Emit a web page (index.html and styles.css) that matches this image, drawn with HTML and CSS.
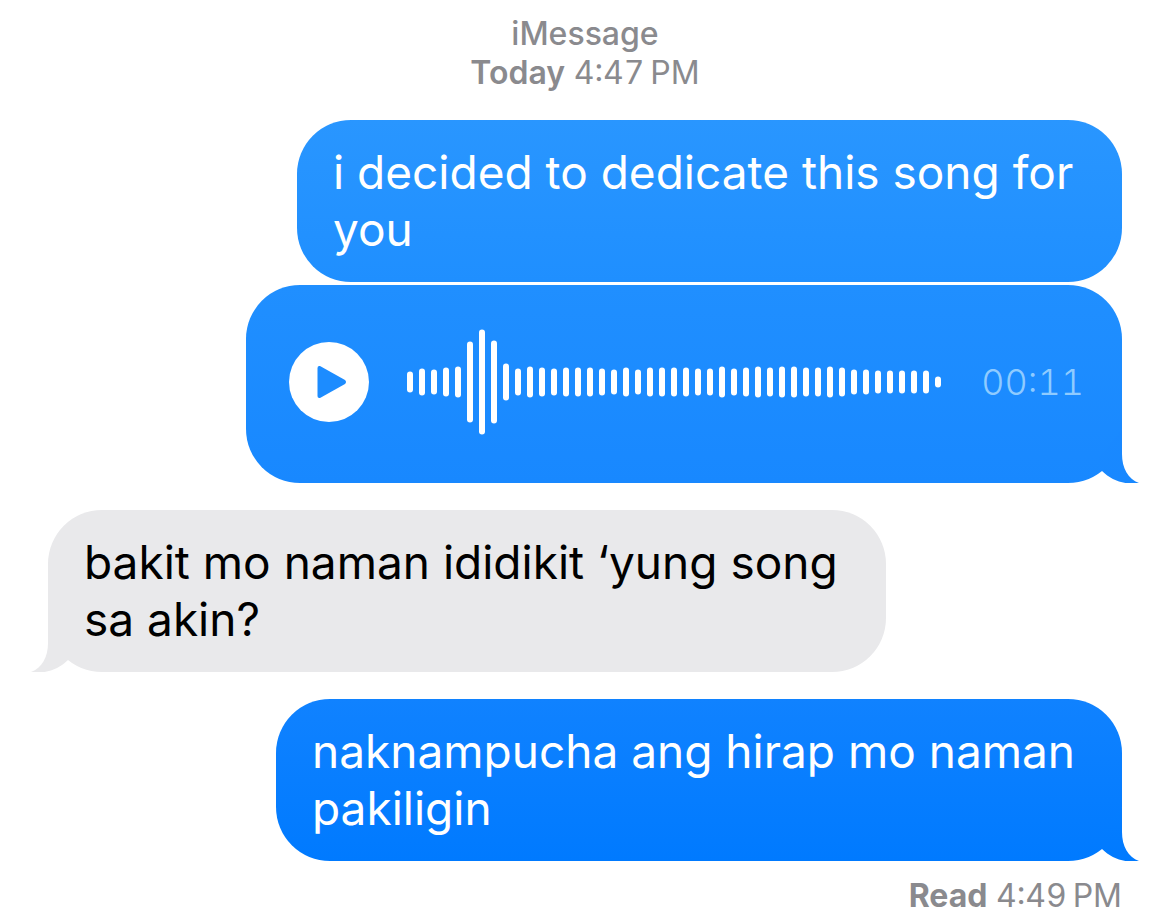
FILE: index.html
```html
<!DOCTYPE html>
<html lang="tl">
<head>
<meta charset="utf-8">
<meta name="viewport" content="width=device-width, initial-scale=1">
<title>iMessage</title>
<link rel="stylesheet" href="styles.css">
</head>
<body>
<main class="thread">
  <header class="stamp">
    <div class="service">iMessage</div>
    <div><strong>Today</strong> <time>4:47&#8201;PM</time></div>
  </header>

  <p class="bubble sent first">i decided to dedicate this song for you</p>

  <div class="bubble sent audio">
    <button class="play" type="button" aria-label="Play audio message">
      <svg viewBox="0 0 80 80" aria-hidden="true"><path d="M28.500 26 Q28.500 23.500 31 24 L56 38 Q58 40 56 42 L31 56 Q28.500 56.500 28.500 54 Z"/></svg>
    </button>
    <svg class="wave" viewBox="0 0 534 106" aria-hidden="true"></svg>
    <time class="duration">00:11</time>
    <svg class="tail" viewBox="0 0 72 54" aria-hidden="true">
      <defs><linearGradient id="g1" x1="0" y1="0" x2="0" y2="1"><stop offset="0" stop-color="#1a89ff"/><stop offset="1" stop-color="#1888ff"/></linearGradient></defs>
      <path fill="url(#g1)" d="M54 0 V25 C54 39 60 50 71 54 C57 56 44 52 34 42 L30 30 Z"/>
    </svg>
  </div>

  <div class="bubble received">bakit mo naman ididikit ‘yung song sa akin?
    <svg class="tail" viewBox="0 0 72 54" aria-hidden="true"><path fill="#e9e9eb" d="M54 0 V25 C54 39 60 50 71 54 C57 56 44 52 34 42 L30 30 Z"/></svg>
  </div>

  <div class="bubble sent last">naknampucha ang hirap mo naman pakiligin
    <svg class="tail" viewBox="0 0 72 54" aria-hidden="true">
      <defs><linearGradient id="g2" x1="0" y1="0" x2="0" y2="1"><stop offset="0" stop-color="#057dff"/><stop offset="1" stop-color="#007aff"/></linearGradient></defs>
      <path fill="url(#g2)" d="M54 0 V25 C54 39 60 50 71 54 C57 56 44 52 34 42 L30 30 Z"/>
    </svg>
  </div>

  <footer class="receipt"><strong>Read</strong> <time>4:49&#8201;PM</time></footer>
</main>
<script src="wave.js"></script>
</body>
</html>
```

FILE: styles.css
```css
* {
  box-sizing: border-box;
}

body {
  margin: 0;
  background: #fff;
  font-family: Inter, "Liberation Sans", sans-serif;
}

.thread {
  display: flex;
  flex-direction: column;
  padding: 14px 48px 0;
}

.stamp,
.receipt {
  color: #8a8a8e;
  font-size: 32px;
  font-variant-numeric: tabular-nums;
  line-height: 39px;
}

.stamp {
  margin-bottom: 28px;
  text-align: center;
}

.service {
  font-weight: 500;
}

.stamp strong {
  font-weight: 600;
}

.receipt strong {
  font-weight: 700;
}

.bubble {
  position: relative;
  margin: 0;
  padding: 24px 36px;
  border-radius: 54px;
  font-size: 46px;
  line-height: 57px;
}

.sent {
  align-self: flex-end;
  color: #fff;
}

.received {
  align-self: flex-start;
  max-width: 838px;
  margin-bottom: 27px;
  background: #e9e9eb;
  color: #000;
}

.first {
  max-width: 825px;
  margin-bottom: 3px;
  background: linear-gradient(#2996ff, #1f8fff);
}

.last {
  max-width: 846px;
  margin-bottom: 15px;
  background: linear-gradient(#1082ff, #007aff);
}

.audio {
  display: flex;
  align-items: center;
  width: 876px;
  max-width: 100%;
  margin-bottom: 27px;
  padding: 44px 38px 48px 43px;
  background: linear-gradient(#208fff, #1888ff);
}

.play {
  flex: none;
  width: 80px;
  height: 80px;
  margin-right: 38px;
  padding: 0;
  border: 0;
  border-radius: 50%;
  background: #fff;
}

.play svg {
  display: block;
  fill: #1c8cff;
}

.wave {
  flex: 0 1 534px;
  min-width: 0;
  height: 106px;
  fill: #fff;
}

.duration {
  margin-left: auto;
  color: #8fcbff;
  font-size: 36px;
  font-variant-numeric: tabular-nums;
  font-weight: 300;
  line-height: 44px;
}

.tail {
  position: absolute;
  right: -18px;
  bottom: 0;
  width: 72px;
  height: 54px;
}

.received .tail {
  right: auto;
  left: -18px;
  transform: scaleX(-1);
}

.receipt {
  align-self: flex-end;
}
```

FILE: wave.js
```javascript
const levels = [
  21, 27, 25, 29, 31, 81, 105, 83, 37, 27, 31, 29, 27, 29, 29,
  29, 27, 25, 29, 25, 29, 29, 29, 29, 27, 27, 31, 27, 29, 31,
  29, 31, 31, 29, 29, 31, 29, 25, 25, 23, 23, 23, 23, 23, 11
];
const wave = document.querySelector(".wave");

levels.forEach((level, i) => {
  const bar = document.createElementNS("http://www.w3.org/2000/svg", "rect");
  bar.setAttribute("x", i * 12);
  bar.setAttribute("y", (106 - level) / 2);
  bar.setAttribute("width", 6);
  bar.setAttribute("height", level);
  bar.setAttribute("rx", 3);
  wave.append(bar);
});
```
